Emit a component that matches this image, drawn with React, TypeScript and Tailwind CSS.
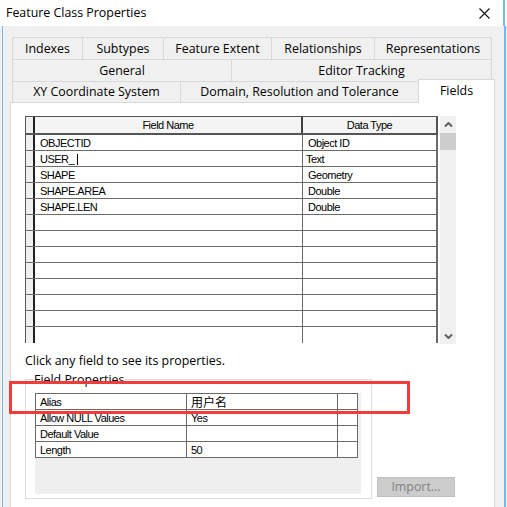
import React from 'react';

const ui = "font-['Open_Sans',sans-serif] text-[12.4px] text-black";
const grid = "font-['Liberation_Sans',Arial,sans-serif] text-[11px] tracking-[-0.5px] text-black";

const row1 = [
  { label: 'Indexes', w: 'w-[70px]' },
  { label: 'Subtypes', w: 'w-[81px]' },
  { label: 'Feature Extent', w: 'w-[108px]' },
  { label: 'Relationships', w: 'w-[103px]' },
  { label: 'Representations', w: 'w-[118px] border-r' },
];

const row2 = [
  { label: 'General', w: 'w-[219px]' },
  { label: 'Editor Tracking', w: 'w-[261px] border-r' },
];

const fields: [string, string][] = [
  ['OBJECTID', 'Object ID'],
  ['USER_', 'Text'],
  ['SHAPE', 'Geometry'],
  ['SHAPE.AREA', 'Double'],
  ['SHAPE.LEN', 'Double'],
  ['', ''],
  ['', ''],
  ['', ''],
  ['', ''],
  ['', ''],
  ['', ''],
  ['', ''],
  ['', ''],
];

const props: [string, string][] = [
  ['Alias', '用户名'],
  ['Allow NULL Values', 'Yes'],
  ['Default Value', ''],
  ['Length', '50'],
];

const Chevron = ({ down }: { down?: boolean }) => (
  <svg width="9" height="6" viewBox="0 0 9 6">
    <path
      d={down ? 'M1 1.5 L4.5 5 L8 1.5' : 'M1 4.5 L4.5 1 L8 4.5'}
      fill="none"
      stroke="#606060"
      strokeWidth="2"
    />
  </svg>
);

const FieldGrid = () => (
  <div className="flex gap-[2px]">
    <div className={`w-[413px] ${grid}`}>
      {/* header */}
      <div className="flex h-[19px] border-t border-b-2 border-[#555555] bg-[#f4f4f4]">
        <div className="w-[10px] h-full border-l border-r-2 border-[#555555] border-r-[#202020] bg-[#f0f0f0]" />
        <div className="w-[268px] h-full border-r-2 border-[#404040] pt-px flex items-center justify-center">Field Name</div>
        <div className="flex-1 h-full border-r-2 border-[#555555] pt-px flex items-center justify-center">Data Type</div>
      </div>
      {fields.map(([name, type], i) => (
        <div
          key={i}
          className={
            i === fields.length - 1
              ? 'flex h-[16px] bg-white'
              : 'flex h-[16px] bg-white border-b border-[#6a6a6a]'
          }
        >
          <div className="w-[10px] h-full border-l border-[#555555] border-r-2 border-r-[#202020] bg-[#f0f0f0]" />
          <div className="w-[268px] h-full border-r border-[#6a6a6a] pl-[5px] pt-px flex items-center">
            {name}
            {i === 1 && <span className="inline-block w-px h-[11px] bg-black ml-[3px]" />}
          </div>
          <div
            className={
              i === 1
                ? 'flex-1 h-full border-r-2 border-[#6a6a6a] pl-[3px] pt-px flex items-center'
                : 'flex-1 h-full border-r-2 border-[#6a6a6a] pl-[5px] pt-px flex items-center'
            }
          >
            {type}
          </div>
        </div>
      ))}
    </div>
    {/* scrollbar */}
    <div className="w-[16px] h-[228px] bg-[#f0f0f0] flex flex-col">
      <div className="h-[17px] flex items-center justify-center">
        <Chevron />
      </div>
      <div className="h-[17px] bg-[#cdcdcd]" />
      <div className="flex-1" />
      <div className="h-[17px] flex items-center justify-center">
        <Chevron down />
      </div>
    </div>
  </div>
);

export default function App() {
  return (
    <div className="relative w-[507px] h-[507px] bg-white flex flex-col overflow-hidden">
      {/* title bar */}
      <div className={`h-[26px] flex items-center justify-between pl-[6px] pr-[13px] mr-[2px] border-r-2 border-[#74b8ee] ${ui}`}>
        <span>Feature Class Properties</span>
        <svg width="11" height="11" viewBox="0 0 11 11">
          <path d="M0.5 0.5 L10.5 10.5 M10.5 0.5 L0.5 10.5" stroke="#111" strokeWidth="1.1" />
        </svg>
      </div>

      <div className="flex-1 flex bg-[#f2f2f2] pl-[2px] pr-[1px]">
        <div className={`flex-1 flex flex-col border-l border-r-2 border-[#74b8ee] bg-[#f0f0f0] pt-[11px] pl-[7px] ${ui}`}>
          {/* tabs */}
          <div className="flex h-[22px] ml-[2px]">
            {row1.map((t) => (
              <div key={t.label} className={`${t.w} h-full border-t border-l border-[#d9d9d9] pt-px flex items-center justify-center`}>
                {t.label}
              </div>
            ))}
          </div>
          <div className="flex h-[22px] ml-[2px]">
            {row2.map((t) => (
              <div key={t.label} className={`${t.w} h-full border-t border-l border-[#d9d9d9] pt-px flex items-center justify-center`}>
                {t.label}
              </div>
            ))}
          </div>
          <div className="flex items-end h-[22px]">
            <div className="w-[2px] h-full border-b border-[#d9d9d9]" />
            <div className="w-[168px] h-full border-t border-l border-b border-[#d9d9d9] pt-px flex items-center justify-center">
              XY Coordinate System
            </div>
            <div className="w-[238px] h-full border-t border-l border-b border-[#d9d9d9] pt-px flex items-center justify-center">
              Domain, Resolution and Tolerance
            </div>
            <div className="w-[77px] h-[24px] border-t border-l border-r border-[#d9d9d9] bg-white flex items-start justify-center pt-[2px]">
              Fields
            </div>
          </div>

          {/* page */}
          <div className="w-[485px] flex-1 bg-white border-l border-r border-[#d9d9d9] pt-[13px] pl-[14px]">
            <FieldGrid />
            <div className="mt-[9px] leading-[16px]">Click any field to see its properties.</div>

            <div className="flex items-end mt-[10px]">
              <div className="relative w-[347px] h-[120px] border border-[#dcdcdc] pt-[13px] pl-[9px] pr-[10px] pb-[4px]">
                <span className="absolute left-[7px] top-[-8px] bg-white px-[1px] leading-[16px]">Field Properties</span>
                <div className="h-full bg-[#efefef]">
                  <div className={`w-[323px] border border-[#6a6a6a] bg-white ${grid}`}>
                    {props.map(([k, v], i) => (
                      <div
                        key={k}
                        className={i === props.length - 1 ? 'flex h-[15px]' : 'flex h-[16px] border-b border-[#6a6a6a]'}
                      >
                        <div className="w-[151px] h-full border-r border-[#6a6a6a] pl-[4px] pt-px flex items-center">{k}</div>
                        <div className="w-[151px] h-full border-r border-[#6a6a6a] pl-[4px] pt-px flex items-center">
                          {i === 0 ? (
                            <span className="text-[12px] font-['Noto_Sans_CJK_SC',sans-serif] tracking-normal">{v}</span>
                          ) : (
                            <span>{v}</span>
                          )}
                        </div>
                        <div className="flex-1 h-full" />
                      </div>
                    ))}
                  </div>
                </div>
              </div>
              <button className="ml-[5px] mb-[2px] w-[78px] h-[20px] bg-[#cccccc] border border-[#bfbfbf] text-[#838383] flex items-center justify-center">
                Import...
              </button>
            </div>
          </div>
        </div>
      </div>

      {/* annotation */}
      <div className="absolute left-[9px] top-[381px] w-[401px] h-[33px] border-[3px] border-[#f23b3b]" />
    </div>
  );
}
